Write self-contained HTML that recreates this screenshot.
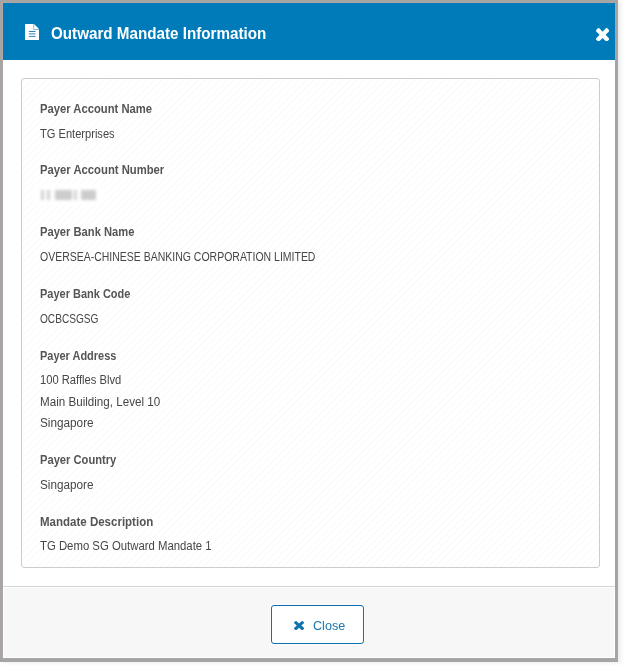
<!DOCTYPE html>
<html>
<head>
<meta charset="utf-8">
<style>
html,body{margin:0;padding:0;background:#fff;width:624px;height:668px;overflow:hidden;}
body{position:relative;font-family:"Liberation Sans",sans-serif;}
.shadow{position:absolute;left:0;top:0;width:618px;height:662px;box-shadow:3px 1px 4px rgba(0,0,0,.07);}
.frame{position:absolute;left:0;top:0;width:618px;height:662px;background:#a5a5a5;}
.edge{position:absolute;left:2px;top:2px;width:613px;height:656px;background:#aea7a4;}
.modal{position:absolute;left:3px;top:3px;width:612px;height:655px;background:#fff;overflow:hidden;}
.header{position:absolute;left:0;top:0;width:612px;height:57px;background:#007bba;}
.title{position:absolute;left:48px;top:20.5px;font-size:16px;transform-origin:0 0;transform:scaleX(0.95);font-weight:700;color:#fff;white-space:nowrap;line-height:20px;}
.hicon{position:absolute;left:22px;top:21px;}
.hclose{position:absolute;left:592.9px;top:24.7px;}
.panel{position:absolute;left:18px;top:75px;width:577px;height:488px;border:1px solid #cccccc;border-radius:3px;
 background:#fff;overflow:hidden;}
.t{position:absolute;left:37px;transform-origin:0 0;white-space:nowrap;font-size:12px;line-height:14px;}
.l{font-weight:700;color:#555555;}
.v{color:#464646;}
.footer{position:absolute;left:0;top:583px;width:612px;height:72px;background:#fff;}
.fline{position:absolute;left:0;top:0;width:612px;height:1px;background:#d6d6d6;}
.fbg{position:absolute;left:1px;top:2px;width:610px;height:69px;background:#f7f7f7;}
.btn{position:absolute;left:268px;top:602px;width:91px;height:37px;border:1px solid #0b70ad;border-radius:3px;background:#fff;box-shadow:0 0 0 1px #fbfbfb;}
.btxt{position:absolute;left:310px;top:615px;transform-origin:0 0;transform:scaleX(0.97);font-size:13px;line-height:16px;color:#1a77b0;white-space:nowrap;}
.bx{position:absolute;left:290.8px;top:617.7px;}
.blur{position:absolute;left:37px;top:186.5px;width:60px;height:10px;filter:blur(1.6px);}
.blurbg{position:absolute;left:31px;top:181px;width:70px;height:20px;background:#fff;filter:blur(2px);}
</style>
</head>
<body>
<div class="shadow"></div>
<div class="frame"></div>
<div class="edge"></div>
<div class="modal">
  <div class="header">
    <svg class="hicon" width="14" height="16" viewBox="0 0 14 16">
      <path d="M0 0H8.6V5.5H14V16H0Z" fill="#fff"/>
      <path d="M9.1 0L14 5H9.1Z" fill="#fff"/>
      <rect x="3.9" y="7" width="6.6" height="1" fill="#2f86bf"/>
      <rect x="3.9" y="9.4" width="6.6" height="1" fill="#2f86bf"/>
      <rect x="3.9" y="11.9" width="6.6" height="1" fill="#2f86bf"/>
    </svg>
    <div class="title">Outward Mandate Information</div>
    <svg class="hclose" width="13.2" height="13.6" viewBox="302 366 1188 1188" preserveAspectRatio="none"><path d="M1490 1322q0 40-28 68l-136 136q-28 28-68 28t-68-28l-294-294-294 294q-28 28-68 28t-68-28l-136-136q-28-28-28-68t28-68l294-294-294-294q-28-28-28-68t28-68l136-136q28-28 68-28t68 28l294 294 294-294q28-28 68-28t68 28l136 136q28 28 28 68t-28 68l-294 294 294 294q28 28 28 68z" fill="#fff"/></svg>
  </div>
  <div class="panel"><svg width="577" height="488" style="position:absolute;left:0;top:0"><path d="M3.30 0L-484.70 488M10.54 0L-477.46 488M17.78 0L-470.22 488M25.02 0L-462.98 488M32.26 0L-455.74 488M39.50 0L-448.50 488M46.74 0L-441.26 488M53.98 0L-434.02 488M61.22 0L-426.78 488M68.46 0L-419.54 488M75.70 0L-412.30 488M82.94 0L-405.06 488M90.18 0L-397.82 488M97.42 0L-390.58 488M104.66 0L-383.34 488M111.90 0L-376.10 488M119.14 0L-368.86 488M126.38 0L-361.62 488M133.62 0L-354.38 488M140.86 0L-347.14 488M148.10 0L-339.90 488M155.34 0L-332.66 488M162.58 0L-325.42 488M169.82 0L-318.18 488M177.06 0L-310.94 488M184.30 0L-303.70 488M191.54 0L-296.46 488M198.78 0L-289.22 488M206.02 0L-281.98 488M213.26 0L-274.74 488M220.50 0L-267.50 488M227.74 0L-260.26 488M234.98 0L-253.02 488M242.22 0L-245.78 488M249.46 0L-238.54 488M256.70 0L-231.30 488M263.94 0L-224.06 488M271.18 0L-216.82 488M278.42 0L-209.58 488M285.66 0L-202.34 488M292.90 0L-195.10 488M300.14 0L-187.86 488M307.38 0L-180.62 488M314.62 0L-173.38 488M321.86 0L-166.14 488M329.10 0L-158.90 488M336.34 0L-151.66 488M343.58 0L-144.42 488M350.82 0L-137.18 488M358.06 0L-129.94 488M365.30 0L-122.70 488M372.54 0L-115.46 488M379.78 0L-108.22 488M387.02 0L-100.98 488M394.26 0L-93.74 488M401.50 0L-86.50 488M408.74 0L-79.26 488M415.98 0L-72.02 488M423.22 0L-64.78 488M430.46 0L-57.54 488M437.70 0L-50.30 488M444.94 0L-43.06 488M452.18 0L-35.82 488M459.42 0L-28.58 488M466.66 0L-21.34 488M473.90 0L-14.10 488M481.14 0L-6.86 488M488.38 0L0.38 488M495.62 0L7.62 488M502.86 0L14.86 488M510.10 0L22.10 488M517.34 0L29.34 488M524.58 0L36.58 488M531.82 0L43.82 488M539.06 0L51.06 488M546.30 0L58.30 488M553.54 0L65.54 488M560.78 0L72.78 488M568.02 0L80.02 488M575.26 0L87.26 488M582.50 0L94.50 488M589.74 0L101.74 488M596.98 0L108.98 488M604.22 0L116.22 488M611.46 0L123.46 488M618.70 0L130.70 488M625.94 0L137.94 488M633.18 0L145.18 488M640.42 0L152.42 488M647.66 0L159.66 488M654.90 0L166.90 488M662.14 0L174.14 488M669.38 0L181.38 488M676.62 0L188.62 488M683.86 0L195.86 488M691.10 0L203.10 488M698.34 0L210.34 488M705.58 0L217.58 488M712.82 0L224.82 488M720.06 0L232.06 488M727.30 0L239.30 488M734.54 0L246.54 488M741.78 0L253.78 488M749.02 0L261.02 488M756.26 0L268.26 488M763.50 0L275.50 488M770.74 0L282.74 488M777.98 0L289.98 488M785.22 0L297.22 488M792.46 0L304.46 488M799.70 0L311.70 488M806.94 0L318.94 488M814.18 0L326.18 488M821.42 0L333.42 488M828.66 0L340.66 488M835.90 0L347.90 488M843.14 0L355.14 488M850.38 0L362.38 488M857.62 0L369.62 488M864.86 0L376.86 488M872.10 0L384.10 488M879.34 0L391.34 488M886.58 0L398.58 488M893.82 0L405.82 488M901.06 0L413.06 488M908.30 0L420.30 488M915.54 0L427.54 488M922.78 0L434.78 488M930.02 0L442.02 488M937.26 0L449.26 488M944.50 0L456.50 488M951.74 0L463.74 488M958.98 0L470.98 488M966.22 0L478.22 488M973.46 0L485.46 488M980.70 0L492.70 488M987.94 0L499.94 488M995.18 0L507.18 488M1002.42 0L514.42 488M1009.66 0L521.66 488M1016.90 0L528.90 488M1024.14 0L536.14 488M1031.38 0L543.38 488M1038.62 0L550.62 488M1045.86 0L557.86 488M1053.10 0L565.10 488M1060.34 0L572.34 488M1067.58 0L579.58 488" stroke="#f7f7f7" stroke-width="1" fill="none"/></svg></div>
  <div class="footer"><div class="fline"></div><div class="fbg"></div></div>
  <div class="btn"></div>
  <svg class="bx" width="10.1" height="9.2" viewBox="302 366 1188 1188" preserveAspectRatio="none"><path d="M1490 1322q0 40-28 68l-136 136q-28 28-68 28t-68-28l-294-294-294 294q-28 28-68 28t-68-28l-136-136q-28-28-28-68t28-68l294-294-294-294q-28-28-28-68t28-68l136-136q28-28 68-28t68 28l294 294 294-294q28-28 68-28t68 28l136 136q28 28 28 68t-28 68l-294 294 294 294q28 28 28 68z" fill="#1272ad"/></svg>
  <div class="btxt">Close</div>
</div>
<div style="position:absolute;left:3px;top:3px;">
  <div class="t l" style="top:99px;transform:scaleX(0.937)">Payer Account Name</div>
  <div class="t v" style="top:124px;transform:scaleX(0.925)">TG Enterprises</div>
  <div class="t l" style="top:160px;transform:scaleX(0.9394)">Payer Account Number</div>
  <div class="blurbg"></div><div class="blur">
    <div style="position:absolute;left:0.6px;top:0;width:3.4px;height:10px;background:#d0d0d0"></div>
    <div style="position:absolute;left:7px;top:0;width:3.4px;height:10px;background:#d0d0d0"></div>
    <div style="position:absolute;left:14.5px;top:0;width:17.5px;height:10px;background:#cccccc"></div>
    <div style="position:absolute;left:33.6px;top:0;width:3.2px;height:10px;background:#d3d3d3"></div>
    <div style="position:absolute;left:40.7px;top:0;width:15.8px;height:10px;background:#cccccc"></div>
  </div>
  <div class="t l" style="top:222px;transform:scaleX(0.9307)">Payer Bank Name</div>
  <div class="t v" style="top:247px;transform:scaleX(0.874)">OVERSEA-CHINESE BANKING CORPORATION LIMITED</div>
  <div class="t l" style="top:284px;transform:scaleX(0.9153)">Payer Bank Code</div>
  <div class="t v" style="top:309px;transform:scaleX(0.8435)">OCBCSGSG</div>
  <div class="t l" style="top:346px;transform:scaleX(0.9133)">Payer Address</div>
  <div class="t v" style="top:370px;transform:scaleX(0.9322)">100 Raffles Blvd</div>
  <div class="t v" style="top:392px;transform:scaleX(0.9685)">Main Building, Level 10</div>
  <div class="t v" style="top:413px;transform:scaleX(0.98)">Singapore</div>
  <div class="t l" style="top:450px;transform:scaleX(0.9305)">Payer Country</div>
  <div class="t v" style="top:475px;transform:scaleX(0.978)">Singapore</div>
  <div class="t l" style="top:512px;transform:scaleX(0.9593)">Mandate Description</div>
  <div class="t v" style="top:536px;transform:scaleX(0.9459)">TG Demo SG Outward Mandate 1</div>
</div>
</body>
</html>
